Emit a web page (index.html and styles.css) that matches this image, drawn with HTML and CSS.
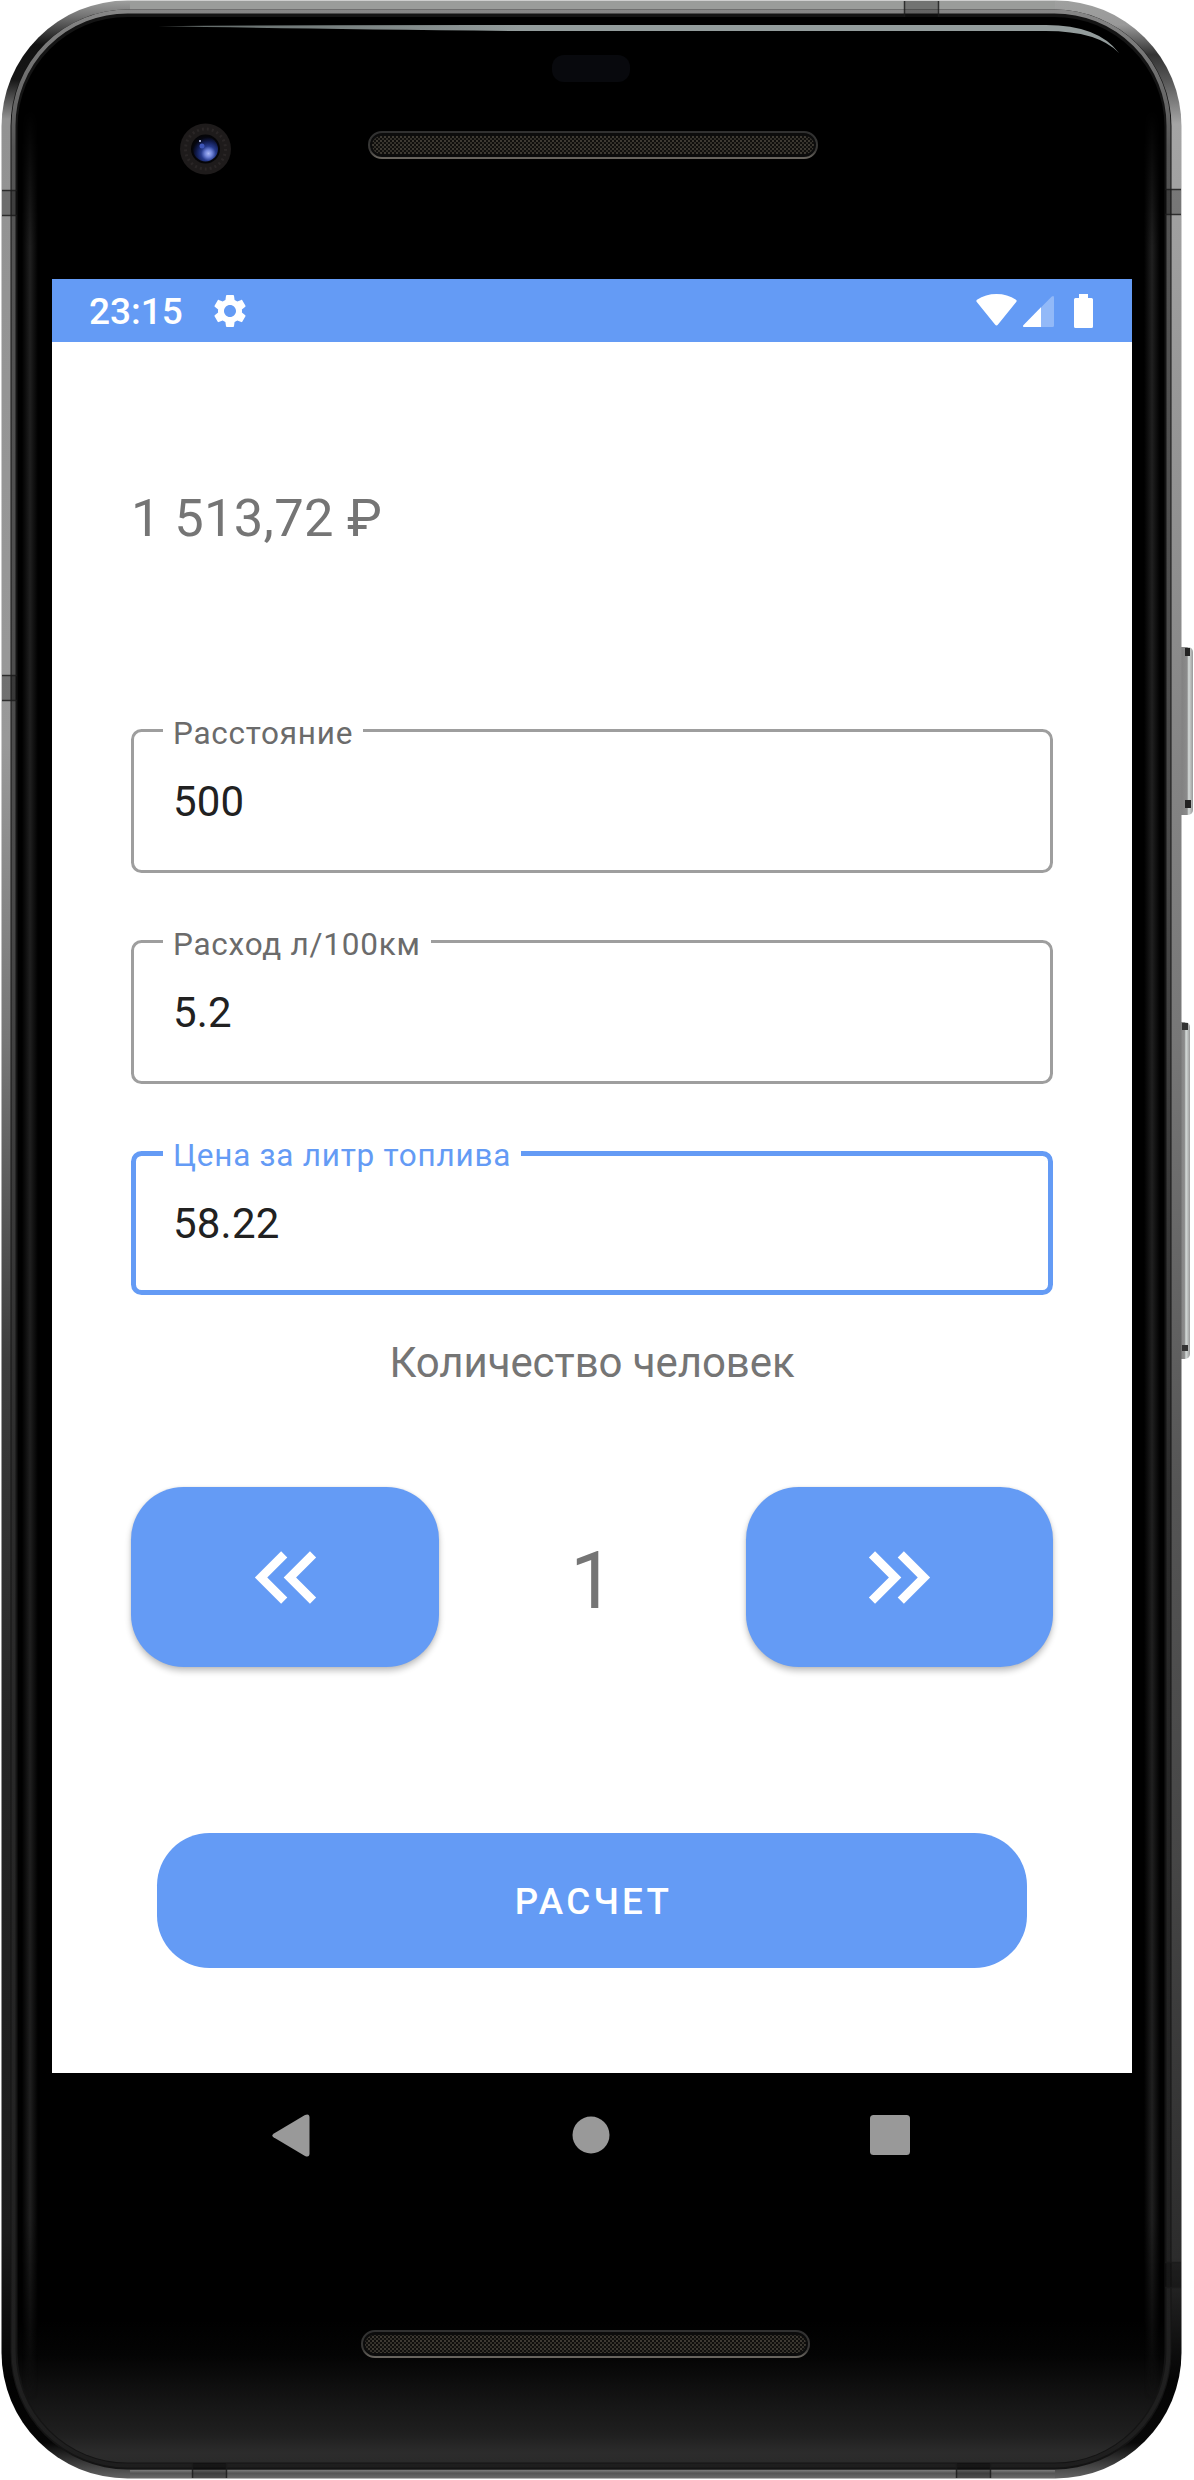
FILE: index.html
```html
<!DOCTYPE html>
<html lang="ru">
<head>
<meta charset="utf-8">
<title>Расчет поездки</title>
<link rel="stylesheet" href="styles.css">
</head>
<body>
<div class="device">
  <svg class="frame" width="1194" height="2480" viewBox="0 0 1194 2480" aria-hidden="true">
    <defs>
      <linearGradient id="rimLeft" gradientUnits="userSpaceOnUse" x1="0" y1="0" x2="0" y2="2480">
        <stop offset="0" stop-color="#9fa09f"/>
        <stop offset=".006" stop-color="#777"/>
        <stop offset=".018" stop-color="#111"/>
        <stop offset=".032" stop-color="#151515"/>
        <stop offset=".048" stop-color="#929292"/>
        <stop offset=".3" stop-color="#999"/>
        <stop offset=".42" stop-color="#777"/>
        <stop offset=".55" stop-color="#3c3c3c"/>
        <stop offset=".7" stop-color="#252525"/>
        <stop offset=".9" stop-color="#1c1c1c"/>
        <stop offset=".96" stop-color="#020202"/>
        <stop offset=".985" stop-color="#050505"/>
        <stop offset="1" stop-color="#686868"/>
      </linearGradient>
      <linearGradient id="rimRight" gradientUnits="userSpaceOnUse" x1="0" y1="0" x2="0" y2="2480">
        <stop offset="0" stop-color="#9fa09f"/>
        <stop offset=".01" stop-color="#999"/>
        <stop offset=".022" stop-color="#333"/>
        <stop offset=".032" stop-color="#555"/>
        <stop offset=".05" stop-color="#a5a5a5"/>
        <stop offset=".25" stop-color="#8c8c8c"/>
        <stop offset=".42" stop-color="#777"/>
        <stop offset=".6" stop-color="#555"/>
        <stop offset=".75" stop-color="#464646"/>
        <stop offset=".91" stop-color="#2c2c2c"/>
        <stop offset=".96" stop-color="#040404"/>
        <stop offset=".985" stop-color="#080808"/>
        <stop offset="1" stop-color="#686868"/>
      </linearGradient>
      <linearGradient id="innerRim" gradientUnits="userSpaceOnUse" x1="0" y1="0" x2="0" y2="2480">
        <stop offset="0" stop-color="#8a8a8a"/>
        <stop offset=".06" stop-color="#555"/>
        <stop offset=".35" stop-color="#4a4a4a"/>
        <stop offset=".6" stop-color="#2c2c2c"/>
        <stop offset="1" stop-color="#1e1e1e"/>
      </linearGradient>
      <linearGradient id="glass" gradientUnits="userSpaceOnUse" x1="0" y1="2320" x2="0" y2="2463">
        <stop offset="0" stop-color="#000"/>
        <stop offset=".25" stop-color="#040404"/>
        <stop offset=".6" stop-color="#161616"/>
        <stop offset=".8" stop-color="#1f1f1f"/>
        <stop offset=".93" stop-color="#2c2c2c"/>
        <stop offset="1" stop-color="#2a2a2a"/>
      </linearGradient>
      <linearGradient id="edgeGlow">
        <stop offset="0" stop-color="#1e1e1e" stop-opacity="0"/>
        <stop offset=".5" stop-color="#202020"/>
        <stop offset="1" stop-color="#1e1e1e" stop-opacity="0"/>
      </linearGradient>
      <linearGradient id="glowFade" gradientUnits="userSpaceOnUse" x1="0" y1="110" x2="0" y2="2400">
        <stop offset="0" stop-color="#000"/>
        <stop offset=".06" stop-color="#fff"/>
        <stop offset=".92" stop-color="#fff"/>
        <stop offset="1" stop-color="#000"/>
      </linearGradient>
      <mask id="glowMask" maskUnits="userSpaceOnUse" x="0" y="110" width="1194" height="2290">
        <rect y="110" width="1194" height="2290" fill="url(#glowFade)"/>
      </mask>
      <linearGradient id="topGlint" gradientUnits="userSpaceOnUse" x1="158" y1="0" x2="520" y2="0">
        <stop offset="0" stop-color="#5e6665"/>
        <stop offset="1" stop-color="#939c9c"/>
      </linearGradient>
      <linearGradient id="bottomRim" x1="0" y1="0" x2="0" y2="1">
        <stop offset="0" stop-color="#7d7d7d"/>
        <stop offset=".4" stop-color="#555"/>
        <stop offset="1" stop-color="#6a6a6a"/>
      </linearGradient>
      <linearGradient id="keyMetal">
        <stop offset="0" stop-color="#777"/>
        <stop offset=".65" stop-color="#8b8b8b"/>
        <stop offset=".75" stop-color="#d5dbd9"/>
        <stop offset="1" stop-color="#999"/>
      </linearGradient>
      <linearGradient id="grilleRing" x1="0" y1="0" x2="0" y2="1">
        <stop offset="0" stop-color="#303030"/>
        <stop offset=".7" stop-color="#3a3937"/>
        <stop offset="1" stop-color="#69655f"/>
      </linearGradient>
      <pattern id="mesh" width="4" height="4" patternUnits="userSpaceOnUse">
        <rect width="4" height="4" fill="#100f0d"/>
        <rect width="2" height="2" fill="#3e3a33"/>
        <rect x="2" y="2" width="2" height="2" fill="#33302a"/>
      </pattern>
      <radialGradient id="lens" cx=".62" cy=".68" r=".65">
        <stop offset="0" stop-color="#aab8f5"/>
        <stop offset=".22" stop-color="#6f83d8"/>
        <stop offset=".45" stop-color="#263a8c"/>
        <stop offset=".75" stop-color="#101a4c"/>
        <stop offset="1" stop-color="#05060f"/>
      </radialGradient>
      <clipPath id="leftHalf"><rect width="591" height="2480"/></clipPath>
      <clipPath id="rightHalf"><rect x="591" width="603" height="2480"/></clipPath>
    </defs>

    <!-- side keys -->
    <rect x="1176" y="647" width="17" height="168" rx="5" fill="url(#keyMetal)"/>
    <path d="M1185 648h5v8h-5zM1185 800h6v8h-6z" fill="#222"/>
    <rect x="1174" y="1022" width="16" height="337" rx="5" fill="url(#keyMetal)"/>
    <path d="M1182 1023h6v7h-6zM1182 1345h6v6h-6z" fill="#333"/>

    <!-- metal body -->
    <rect x="1.500" y=".5" width="1180" height="2478" rx="126" fill="url(#rimLeft)" clip-path="url(#leftHalf)"/>
    <rect x="1.500" y=".5" width="1180" height="2478" rx="126" fill="url(#rimRight)" clip-path="url(#rightHalf)"/>
    <path d="M130 1H1055V10H130z" fill="#9a9c9a"/>
    <path d="M130 2470H1055V2478H130z" fill="url(#bottomRim)"/>
    <rect x="10.500" y="9.500" width="1161" height="2460" rx="117" fill="#141414"/>
    <rect x="13.500" y="11.500" width="1155" height="2454" rx="114" fill="none" stroke="url(#innerRim)" stroke-width="4"/>

    <!-- antenna bands -->
    <g fill="#000" fill-opacity=".26">
      <path d="M2 190h15v26H2z"/>
      <path d="M2 675h15v26H2z"/>
      <path d="M1165 189h16v26h-16z"/>
      <path d="M1165 2262h16v26h-16z"/>
      <path d="M904 1h35v16h-35z"/>
      <path d="M192 2463h35v15h-35z"/>
      <path d="M956 2463h35v15h-35z"/>
    </g>
    <path fill="none" stroke="#1c1c1c" stroke-opacity=".8" stroke-width="1.500" d="M2 190.500h15M2 215.500h15M2 675.500h15M2 700.500h15M1165 189.500h16M1165 214.500h16M1165 2262.500h16M1165 2287.500h16M904.500 1v16M938.500 1v16M192.500 2463v15M226.500 2463v15M956.500 2463v15M990.500 2463v15"/>

    <!-- front glass -->
    <rect x="17.500" y="17" width="1147" height="2445.500" rx="110" fill="url(#glass)"/>
    <g mask="url(#glowMask)">
      <rect x="22" y="110" width="16" height="2290" fill="url(#edgeGlow)"/>
      <rect x="1144" y="110" width="16" height="2290" fill="url(#edgeGlow)"/>
    </g>
    <path d="M158 26Q300 25 480 25H1046Q1098 25 1119 53Q1098 31 1046 31H520Q300 29 158 26z" fill="url(#topGlint)"/>

    <!-- sensor, camera, speakers -->
    <rect x="552" y="55" width="78" height="27" rx="12" fill="#08090d"/>
    <circle cx="205.500" cy="149" r="25.500" fill="#1e1b1b"/>
    <circle cx="205.500" cy="149" r="20" fill="none" stroke="#2a2626" stroke-width="3" stroke-dasharray="2 3"/>
    <circle cx="205.500" cy="149" r="14.500" fill="#050508"/>
    <circle cx="205.500" cy="149" r="12.500" fill="url(#lens)"/>
    <circle cx="202" cy="146" r="2.500" fill="#3e55b8"/>
    <circle cx="200" cy="141" r="1" fill="#ccd4ff"/>

    <rect x="369" y="132" width="448" height="26" rx="13" fill="#0c0c0c" stroke="url(#grilleRing)" stroke-width="2"/>
    <rect x="372" y="136" width="442" height="18" rx="9" fill="url(#mesh)"/>
    <rect x="362" y="2331" width="447" height="26" rx="13" fill="#0c0c0c" stroke="url(#grilleRing)" stroke-width="2"/>
    <rect x="365" y="2335" width="441" height="18" rx="9" fill="url(#mesh)"/>
  </svg>

  <div class="screen">
    <header class="status">
      <span class="clock">23:15</span>
      <svg class="gear" width="40" height="40" viewBox="0 0 24 24"><path fill="#fff" d="M19.140 12.940c.04-.3.06-.61.06-.94 0-.32-.02-.64-.07-.94l2.030-1.580c.18-.14.23-.41.12-.61l-1.920-3.320c-.12-.22-.37-.29-.59-.22l-2.390.96c-.5-.38-1.030-.7-1.620-.94L14.400 2.810c-.04-.24-.24-.41-.48-.41h-3.840c-.24 0-.43.17-.47.41L9.250 5.350c-.59.24-1.130.57-1.620.94L5.240 5.330c-.22-.08-.47 0-.59.22L2.740 8.870c-.12.21-.08.47.12.61l2.030 1.580c-.05.3-.09.63-.09.94s.02.64.07.94l-2.030 1.580c-.18.14-.23.41-.12.61l1.920 3.320c.12.22.37.29.59.22l2.390-.96c.5.38 1.030.7 1.620.94l.36 2.540c.05.24.24.41.48.41h3.840c.24 0 .44-.17.47-.41l.36-2.540c.59-.24 1.130-.56 1.620-.94l2.390.96c.22.08.47 0 .59-.22l1.920-3.320c.12-.22.07-.47-.12-.61l-2.010-1.580zM12 15.600c-1.980 0-3.600-1.620-3.600-3.600s1.620-3.600 3.600-3.600 3.600 1.620 3.600 3.600-1.620 3.600-3.600 3.600z"/></svg>
      <svg class="signals" width="118" height="36" viewBox="0 0 118 36">
        <path fill="#fff" d="M.8 9Q-.2 7.800 1 6.800Q9.500 1 20.500 1T40 6.800Q41.200 7.800 40.200 9L22 31.500Q20.500 33.300 19 31.500z"/>
        <path fill="#fff" fill-opacity=".3" d="M47.400 32.300L75.800 3.500Q78 2 78 4.500V32.500Q78 34 76.500 34H48.200Q46.200 33.800 47.400 32.300z"/>
        <path fill="#fff" d="M47.400 32.300L65 14.300V34H48.200Q46.200 33.800 47.400 32.300z"/>
        <path fill="#fff" d="M103 1h9v4h3.500q1.500 0 1.500 1.500v27q0 1.500-1.500 1.500h-16q-1.500 0-1.500-1.500v-27q0-1.500 1.500-1.500h3.500z"/>
      </svg>
    </header>

    <main class="app">
      <div class="total">1 513,72 ₽</div>
      <div class="fields">
        <div class="field"><span class="label">Расстояние</span><span class="value">500</span></div>
        <div class="field"><span class="label">Расход л/100км</span><span class="value">5.2</span></div>
        <div class="field focused"><span class="label">Цена за литр топлива</span><span class="value">58.22</span></div>
      </div>
      <div class="people">Количество человек</div>
      <div class="stepper">
        <div class="step">
          <svg width="105" height="105" viewBox="0 0 24 24"><path fill="#fff" d="M17.590 18L19 16.590 14.420 12 19 7.410 17.590 6l-6 6zM11 18l1.410-1.410L7.830 12l4.580-4.590L11 6l-6 6z"/></svg>
        </div>
        <div class="count">1</div>
        <div class="step">
          <svg width="105" height="105" viewBox="0 0 24 24"><path fill="#fff" d="M6.410 6L5 7.410 9.580 12 5 16.590 6.410 18l6-6zM13 6l-1.410 1.410L16.170 12l-4.580 4.590L13 18l6-6z"/></svg>
        </div>
      </div>
      <div class="submit">РАСЧЕТ</div>
    </main>

    <nav class="navbar">
      <svg width="38" height="43" viewBox="0 0 38 43"><path fill="#999" d="M1.500 19.700L33 1Q37.500-.8 37.500 3.500V39.500Q37.500 43.800 33 42L1.500 23.300Q-.8 21.500 1.500 19.700z"/></svg>
      <svg width="38" height="38" viewBox="0 0 38 38"><circle cx="19" cy="19" r="18.500" fill="#999"/></svg>
      <svg width="40" height="40" viewBox="0 0 40 40"><rect width="40" height="40" rx="3.500" fill="#999"/></svg>
    </nav>
  </div>
</div>
</body>
</html>
```

FILE: styles.css
```css
* {
  box-sizing: border-box;
}

body {
  margin: 0;
  background: #fff;
  font-family: Roboto, "Noto Sans", sans-serif;
}

svg {
  display: block;
}

.device {
  position: relative;
  width: 1194px;
  height: 2480px;
  padding: 279px 62px 281px 52px;
  overflow: hidden;
}

.frame {
  position: absolute;
  top: 0;
  left: 0;
}

.screen {
  position: relative;
  display: flex;
  flex-direction: column;
  width: 1080px;
  height: 1920px;
  background: #fff;
}

.status {
  display: flex;
  align-items: center;
  height: 63px;
  padding: 0 38px 0 37px;
  background: #649bf5;
}

.clock {
  padding-top: 3px;
  color: #fff;
  font-size: 37px;
  font-weight: 500;
  line-height: 44px;
}

.gear {
  margin-left: 27px;
}

.signals {
  margin: 0 0 0 auto;
}

.app {
  display: flex;
  flex: 1;
  flex-direction: column;
  padding: 145px 79px 0;
}

.total {
  color: #757575;
  font-size: 52.5px;
  letter-spacing: 0.3px;
  line-height: 62px;
}

.fields {
  display: flex;
  flex-direction: column;
  gap: 67px;
  margin-top: 180px;
}

.field {
  position: relative;
  height: 144px;
  padding: 45px 39px 0;
  border: 3px solid #9e9e9e;
  border-radius: 10.5px;
}

.label {
  position: absolute;
  top: -17px;
  left: 29px;
  padding: 0 10px;
  background: #fff;
  color: #6b6b6b;
  font-size: 31.5px;
  letter-spacing: 0.75px;
  line-height: 37px;
  white-space: nowrap;
}

.value {
  display: block;
  color: #212121;
  font-size: 42px;
  letter-spacing: 0.2px;
  line-height: 49px;
}

.focused {
  padding: 43px 37px 0;
  border: 5px solid #649bf5;
}

.focused .label {
  top: -19px;
  left: 27px;
  color: #649bf5;
}

.people {
  margin-top: 43px;
  color: #757575;
  font-size: 42px;
  letter-spacing: -0.08px;
  line-height: 49px;
  text-align: center;
}

.stepper {
  display: grid;
  grid-template-columns: 308px 1fr 307px;
  grid-template-rows: 180px;
  margin-top: 100px;
}

.step {
  display: flex;
  align-items: center;
  justify-content: center;
  border-radius: 52.5px;
  background: #649bf5;
  box-shadow: 0 4px 6px rgba(0, 0, 0, 0.24), 0 0 3px rgba(0, 0, 0, 0.08);
}

.count {
  color: #757575;
  font-size: 78.75px;
  line-height: 188px;
  text-align: center;
}

.submit {
  height: 135px;
  margin: 166px 26px 0;
  padding-left: 3px;
  border-radius: 52.5px;
  background: #649bf5;
  color: #fff;
  font-size: 36.75px;
  font-weight: 500;
  letter-spacing: 3.28px;
  line-height: 138px;
  text-align: center;
}

.navbar {
  display: grid;
  grid-template-columns: 38px 40px 40px;
  justify-content: space-between;
  align-items: center;
  justify-items: end;
  height: 126px;
  padding: 0 222px 2px 220px;
  background: #000;
}
```
